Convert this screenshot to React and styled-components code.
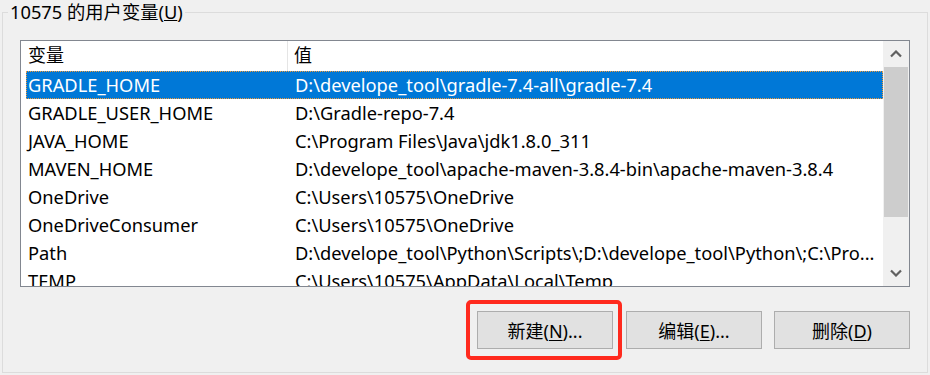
import React from 'react';
import styled, { createGlobalStyle } from 'styled-components';

const Global = createGlobalStyle`
  html, body { margin: 0; padding: 0; background: #f0f0f0; }
  body {
    font-family: "Noto Sans", "Noto Sans CJK SC", sans-serif;
    font-size: 18px;
    color: #000;
  }
  * { box-sizing: border-box; }
`;

const Window = styled.div`
  width: 930px;
  height: 375px;
  padding: 0 2px 2px 2px;
  overflow: hidden;
  background: #f0f0f0;
`;

const Group = styled.fieldset`
  margin: 0;
  padding: 0;
  min-width: 0;
  height: 373px;
  border: 1px solid #dcdcdc;
`;

const Legend = styled.legend`
  margin-left: 5px;
  padding: 0 2px;
  line-height: 24px;
  font-size: 18.3px;
  font-family: "Noto Sans", "Noto Sans CJK SC", sans-serif;
`;

const Body = styled.div`
  padding: 16px 17px 0 17px;
  display: flex;
  flex-direction: column;
`;

const ListBox = styled.div`
  height: 247px;
  border: 1px solid #828790;
  background: #fff;
  display: flex;
  font-size: 18.3px;
`;

const Main = styled.div`
  flex: 1;
  min-width: 0;
  overflow: hidden;
  padding-left: 5px;
  display: flex;
  flex-direction: column;
`;

const HeaderRow = styled.div`
  height: 30px;
  flex: none;
  display: grid;
  grid-template-columns: 261px 1fr;
  font-size: 18px;
`;

const HeaderCell = styled.div`
  line-height: 28px;
  padding-left: ${p => (p.$second ? '6px' : '2px')};
  border-left: ${p => (p.$second ? '1px solid #e5e5e5' : 'none')};
  white-space: nowrap;
`;

const Row = styled.div`
  height: 28px;
  flex: none;
  display: grid;
  grid-template-columns: 261px 1fr;
  background: ${p => (p.$selected ? '#0078d7' : 'transparent')};
  color: ${p => (p.$selected ? '#fff' : '#000')};
  outline: ${p => (p.$selected ? '1px dotted #f09a3a' : 'none')};
  outline-offset: -1px;
`;

const Cell = styled.div`
  line-height: 28px;
  padding-left: ${p => (p.$value ? '8px' : '2px')};
  white-space: nowrap;
  overflow: hidden;
`;

const ScrollBar = styled.div`
  width: 26px;
  flex: none;
  background: #f0f0f0;
  display: flex;
  flex-direction: column;
`;

const ArrowBtn = styled.div`
  height: 26px;
  flex: none;
  display: flex;
  align-items: center;
  justify-content: center;
`;

const Track = styled.div`
  flex: 1;
  padding: 0 1px;
`;

const Thumb = styled.div`
  height: 150px;
  background: #cdcdcd;
`;

const ButtonRow = styled.div`
  margin-top: 24px;
  display: flex;
  justify-content: flex-end;
  gap: 12px;
`;

const Marked = styled.div`
  position: relative;
  margin-right: 1px;
`;

const Highlight = styled.div`
  position: absolute;
  top: -11px;
  left: -11px;
  right: -9px;
  bottom: -11px;
  border: 4px solid #ff2a1e;
  border-radius: 5px;
  pointer-events: none;
`;

const Button = styled.button`
  width: 136px;
  height: 38px;
  padding: 0;
  margin: 0;
  background: #e1e1e1;
  border: 1px solid #adadad;
  border-radius: 0;
  font-family: "Noto Sans", "Noto Sans CJK SC", sans-serif;
  font-size: 18px;
  color: #000;
  u { text-underline-offset: 2px; }
`;

const Chevron = ({ down }) => (
  <svg width="12" height="8" viewBox="0 0 12 8">
    <polyline
      points={down ? '1,1.5 6,6.5 11,1.5' : '1,6.5 6,1.5 11,6.5'}
      fill="none"
      stroke="#606060"
      strokeWidth="2.2"
    />
  </svg>
);

const rows = [
  ['GRADLE_HOME', 'D:\\develope_tool\\gradle-7.4-all\\gradle-7.4'],
  ['GRADLE_USER_HOME', 'D:\\Gradle-repo-7.4'],
  ['JAVA_HOME', 'C:\\Program Files\\Java\\jdk1.8.0_311'],
  ['MAVEN_HOME', 'D:\\develope_tool\\apache-maven-3.8.4-bin\\apache-maven-3.8.4'],
  ['OneDrive', 'C:\\Users\\10575\\OneDrive'],
  ['OneDriveConsumer', 'C:\\Users\\10575\\OneDrive'],
  ['Path', 'D:\\develope_tool\\Python\\Scripts\\;D:\\develope_tool\\Python\\;C:\\Pro...'],
  ['TEMP', 'C:\\Users\\10575\\AppData\\Local\\Temp'],
];

export default function App() {
  return (
    <>
      <Global />
      <Window>
        <Group>
          <Legend>10575 的用户变量(<u>U</u>)</Legend>
          <Body>
            <ListBox>
              <Main>
                <HeaderRow>
                  <HeaderCell>变量</HeaderCell>
                  <HeaderCell $second>值</HeaderCell>
                </HeaderRow>
                {rows.map(([k, v], i) => (
                  <Row key={k} $selected={i === 0}>
                    <Cell>{k}</Cell>
                    <Cell $value>{v}</Cell>
                  </Row>
                ))}
              </Main>
              <ScrollBar>
                <ArrowBtn><Chevron /></ArrowBtn>
                <Track><Thumb /></Track>
                <ArrowBtn><Chevron down /></ArrowBtn>
              </ScrollBar>
            </ListBox>
            <ButtonRow>
              <Marked>
                <Button>新建(<u>N</u>)...</Button>
                <Highlight />
              </Marked>
              <Button>编辑(<u>E</u>)...</Button>
              <Button>删除(<u>D</u>)</Button>
            </ButtonRow>
          </Body>
        </Group>
      </Window>
    </>
  );
}
